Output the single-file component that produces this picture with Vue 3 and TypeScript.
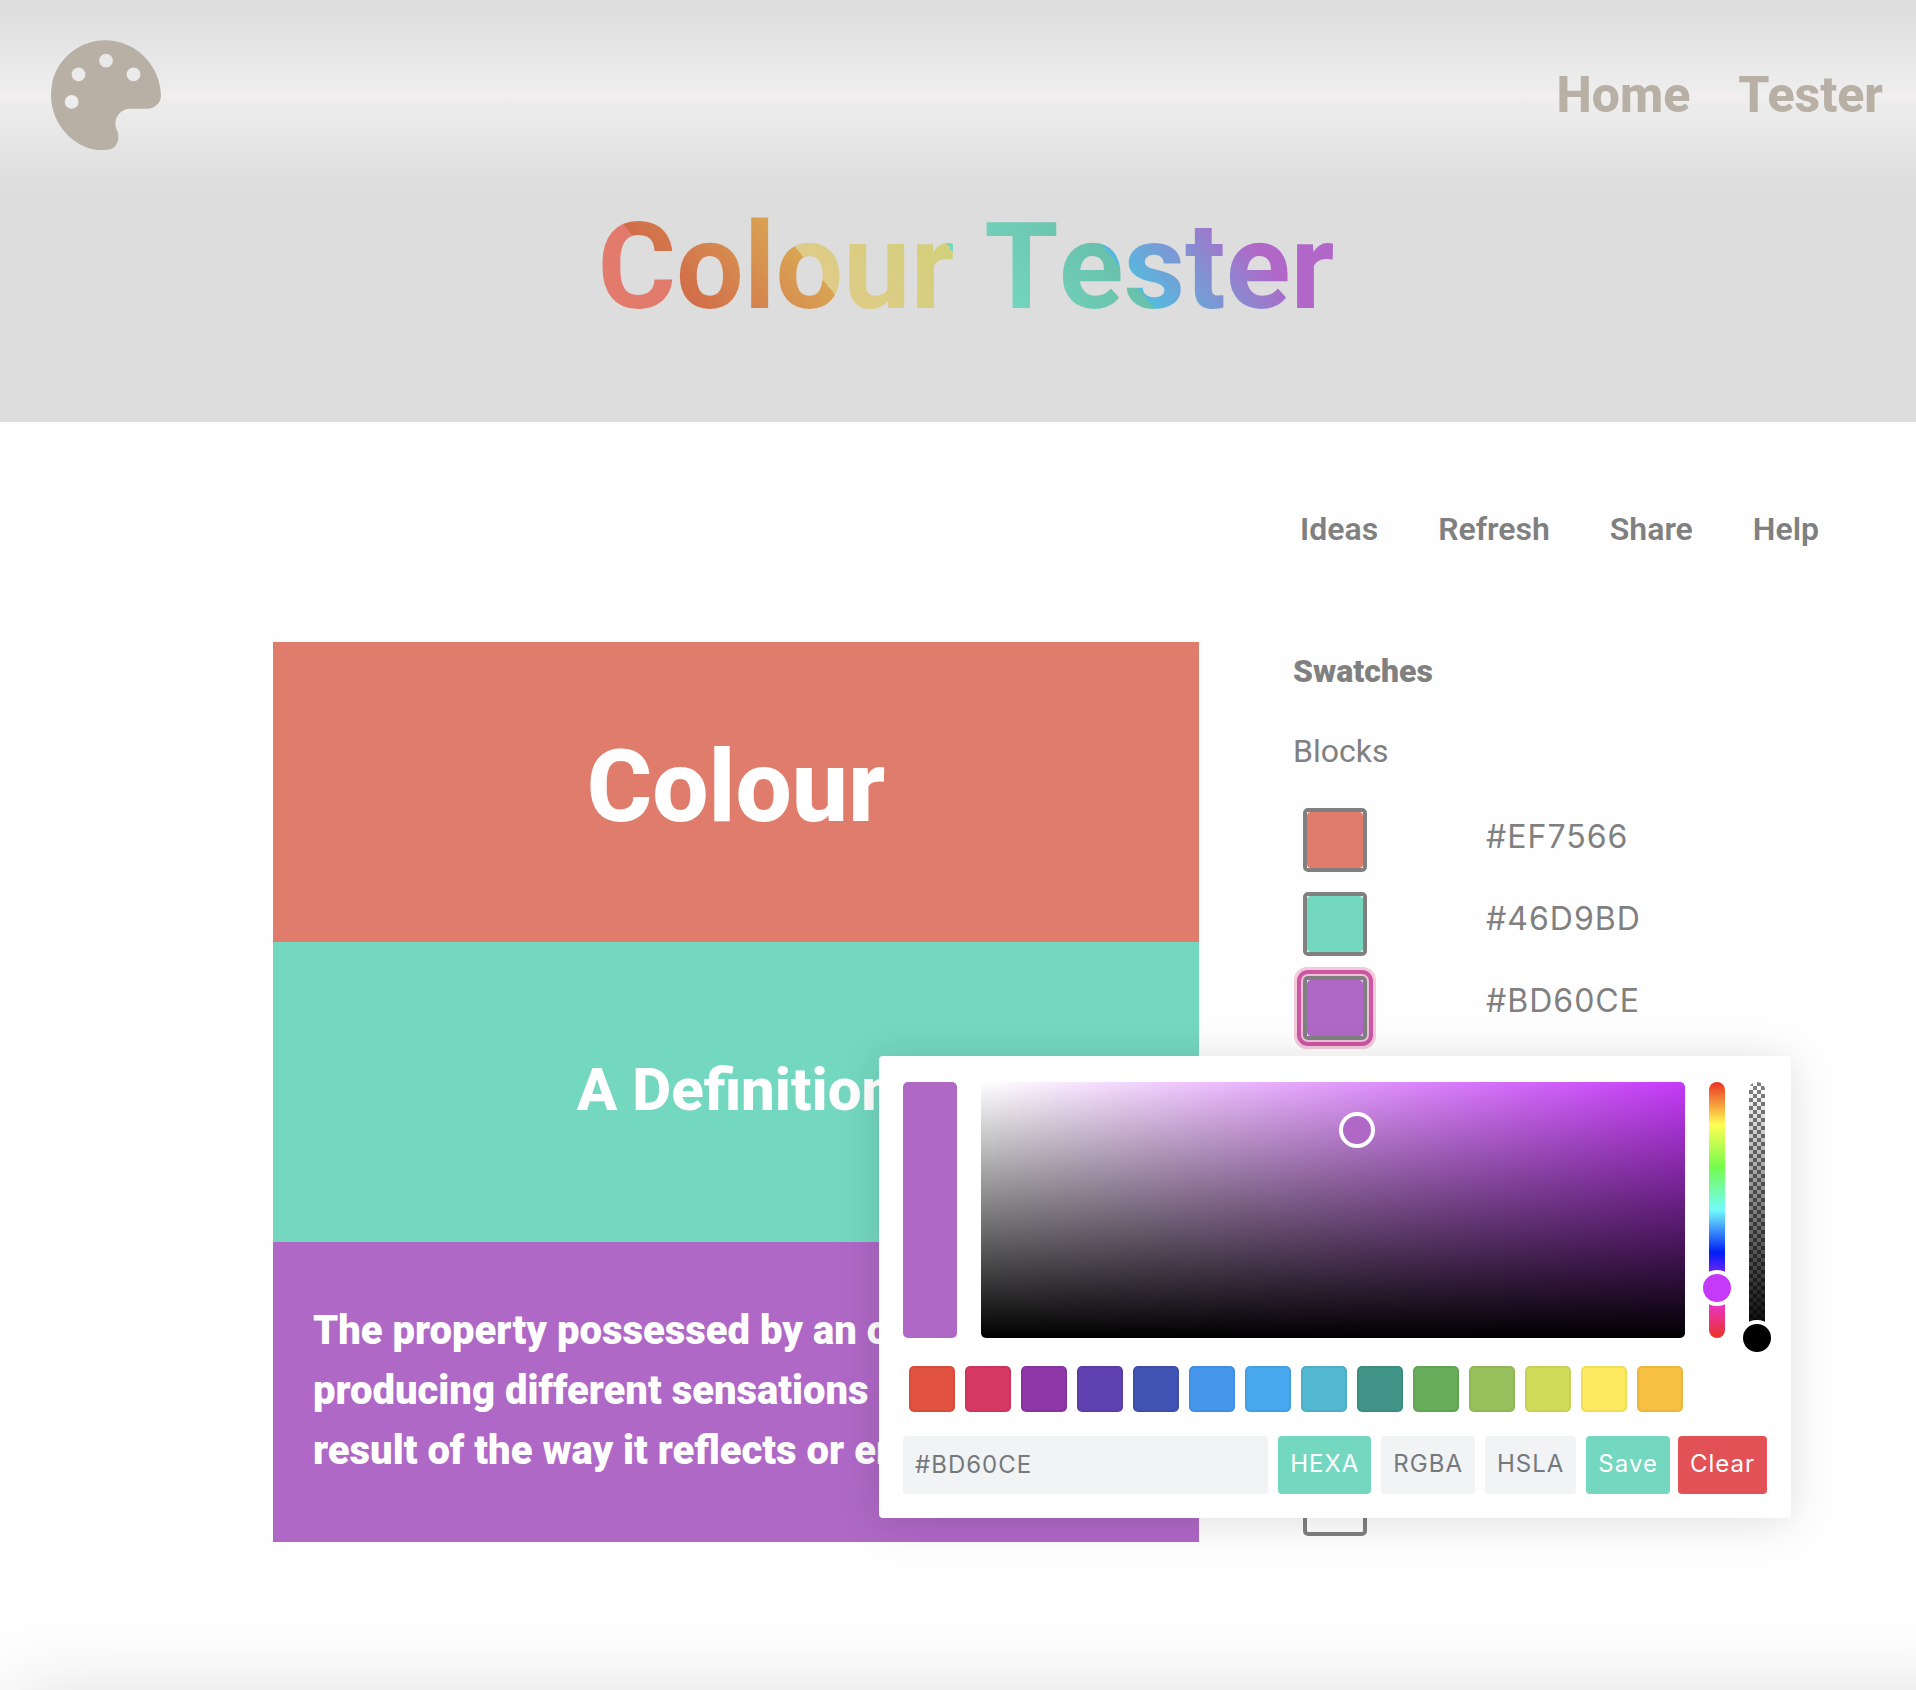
<script setup lang="ts">
import { ref } from 'vue'

interface Swatch {
  label: string
  hex: string
  fill: string
  active?: boolean
}

const navLinks: string[] = ['Home', 'Tester']
const tools: string[] = ['Ideas', 'Refresh', 'Share', 'Help']

const blocks: Swatch[] = [
  { label: 'Top block', hex: '#EF7566', fill: '#df7c6b' },
  { label: 'Middle block', hex: '#46D9BD', fill: '#74d7bf' },
  { label: 'Bottom block', hex: '#BD60CE', fill: '#af68c6', active: true },
]

const presets: string[] = [
  '#e15241', '#d63864', '#8f36a8', '#6041b1', '#4154b3', '#4696ec', '#48a8ee',
  '#53b8d1', '#419488', '#67ad5b', '#98c05c', '#d0dc59', '#fdea60', '#f6c143',
]

const formats: string[] = ['HEXA', 'RGBA', 'HSLA']
const format = ref('HEXA')
const colour = ref('#BD60CE')
const hue = ref(805)
const alpha = ref(1000)
</script>

<template>
  <div class="page">
    <header class="header">
      <nav class="nav" aria-label="Main">
        <a class="logo" href="#" aria-label="Home page">
          <svg viewBox="0 0 512 512" aria-hidden="true">
            <path
              fill="currentColor"
              d="M204 6C104 25 24 105 5 204c-36 192 132 333 264 306 42-6 54-56 38-90-23-46 10-100 62-100h80c32 0 63-27 63-59C511 103 366-25 204 6zM96 320a32 32 0 1 1 0-64 32 32 0 0 1 0 64zm32-128a32 32 0 1 1 0-64 32 32 0 0 1 0 64zm128-64a32 32 0 1 1 0-64 32 32 0 0 1 0 64zm128 64a32 32 0 1 1 0-64 32 32 0 0 1 0 64z"
            />
          </svg>
        </a>
        <div class="nav-links">
          <a v-for="link in navLinks" :key="link" href="#">{{ link }}</a>
        </div>
      </nav>
      <h1 class="title"><span>Colour Tester</span></h1>
    </header>

    <main class="main">
      <nav class="tools" aria-label="Tools">
        <a v-for="tool in tools" :key="tool" href="#">{{ tool }}</a>
      </nav>

      <div class="workspace">
        <section class="preview">
          <div class="block block-top"><h2>Colour</h2></div>
          <div class="block block-middle"><h3>A Definition</h3></div>
          <div class="block block-bottom">
            <p>
              The property possessed by an object of<br />
              producing different sensations<br />
              result of the way it reflects or emits light.
            </p>
          </div>
        </section>

        <aside class="panel">
          <h4>Swatches</h4>
          <h5>Blocks</h5>
          <div class="swatches">
            <div class="wells">
              <div v-for="block in blocks" :key="block.hex" class="well-slot">
                <button
                  type="button"
                  class="well"
                  :class="{ active: block.active }"
                  :aria-label="block.label"
                >
                  <span :style="{ background: block.fill }"></span>
                </button>

                <div v-if="block.active" class="picker" role="dialog" aria-label="Colour picker">
                  <div class="selection">
                    <div class="current"></div>
                    <div class="palette"><i class="handle"></i></div>
                    <div class="slider hue">
                      <input v-model="hue" type="range" min="0" max="1000" aria-label="Hue" />
                    </div>
                    <div class="slider alpha">
                      <input v-model="alpha" type="range" min="0" max="1000" aria-label="Opacity" />
                    </div>
                  </div>
                  <div class="presets">
                    <button
                      v-for="preset in presets"
                      :key="preset"
                      type="button"
                      :aria-label="preset"
                      :style="{ background: preset }"
                    ></button>
                  </div>
                  <div class="controls">
                    <input v-model="colour" type="text" aria-label="Colour value" spellcheck="false" />
                    <button
                      v-for="name in formats"
                      :key="name"
                      type="button"
                      :class="{ chosen: format === name }"
                      @click="format = name"
                    >
                      {{ name }}
                    </button>
                    <div class="actions">
                      <button type="button" class="save">Save</button>
                      <button type="button" class="clear">Clear</button>
                    </div>
                  </div>
                </div>
              </div>
              <button type="button" class="well last" aria-label="Text colour"></button>
            </div>
            <div class="codes">
              <span v-for="block in blocks" :key="block.hex">{{ block.hex }}</span>
            </div>
          </div>
        </aside>
      </div>
    </main>

    <div class="next"><div class="next-card"></div></div>
  </div>
</template>

<style>
body {
  margin: 0;
  background: #fefefe;
}
</style>

<style scoped>
.page,
.page * {
  box-sizing: border-box;
}

.page {
  display: flex;
  flex-direction: column;
  min-height: 100vh;
  overflow: hidden;
  color: #808080;
  font-family: Roboto, sans-serif;
  font-size: 32px;
  line-height: 48px;
}

.page a {
  color: inherit;
  text-decoration: none;
}

h1,
h2,
h3,
h4,
h5,
p {
  margin: 0;
}

button,
input {
  margin: 0;
  padding: 0;
  border: 0;
  font: inherit;
}

.header {
  background: #ddd;
}

.nav {
  display: flex;
  align-items: center;
  justify-content: space-between;
  height: 190px;
  padding: 0 33px 0 51px;
  background: linear-gradient(#ddd, #ededed 46%, #f1eeee 50%, #ededed 54%, #ddd);
  color: #b9b0a5;
}

.logo svg {
  display: block;
  width: 110px;
  height: 110px;
}

.nav-links {
  display: flex;
  gap: 48px;
  font-size: 50px;
  font-weight: 800;
}

.title {
  padding: 7px 0 85px 16px;
  font-size: 120px;
  font-weight: 700;
  line-height: 140px;
  text-align: center;
  font-kerning: none;
}

.title span {
  display: inline-block;
  background: linear-gradient(
    50deg,
    #e37b6c calc(50% - 235px),
    #d16c49 calc(50% - 235px),
    #daa453 calc(50% - 118px),
    #dfcb88 calc(50% - 118px),
    #d2d07a 50%,
    #74d7bf 50%,
    #69c1ac calc(50% + 118px),
    #54bbde calc(50% + 118px),
    #b067c7 calc(50% + 235px)
  );
  background-clip: text;
  color: transparent;
}

.main {
  padding: 83px 96px 0 14.25%;
}

.tools {
  display: flex;
  justify-content: flex-end;
  gap: 60px;
  margin-bottom: 89px;
  padding-right: 1px;
  font-weight: 600;
}

.workspace {
  display: grid;
  grid-template-columns: 926fr 527fr;
  gap: 94px;
}

.block {
  display: flex;
  align-items: center;
  justify-content: center;
  height: 300px;
  padding: 0 40px;
  overflow: hidden;
  color: #fff;
}

.block-top {
  background: #df7c6b;
}

.block-middle {
  background: #74d7bf;
}

.block-bottom {
  justify-content: flex-start;
  background: #af68c6;
}

.block h2 {
  padding-bottom: 10px;
  font-size: 100px;
  font-weight: 800;
  line-height: 120px;
}

.block h3 {
  padding-bottom: 4px;
  font-size: 60px;
  font-weight: 800;
  line-height: 72px;
}

.block p {
  padding-bottom: 2px;
  font-size: 40px;
  font-weight: 900;
  line-height: 60px;
  white-space: nowrap;
}

.panel {
  padding-top: 5px;
}

.panel h4,
.panel h5 {
  font-size: 32px;
}

.panel h4 {
  margin-bottom: 32px;
  font-weight: 900;
}

.panel h5 {
  margin-bottom: 33px;
  font-weight: 400;
}

.swatches {
  display: flex;
  gap: 119px;
  padding-left: 10px;
}

.wells {
  display: flex;
  flex-direction: column;
  gap: 20px;
}

.well-slot {
  position: relative;
  height: 64px;
}

.well {
  display: block;
  width: 64px;
  height: 64px;
  border: 4px solid #808080;
  border-radius: 5px;
  background: #fff;
}

.well span {
  display: block;
  height: 100%;
  border-radius: 4px;
}

.well.active {
  box-shadow:
    0 0 0 2px #ecc0dc,
    0 0 0 6px #cb57a2,
    0 0 0 9px #f3cadc;
}

.well.last {
  margin-top: 412px;
}

.codes {
  display: flex;
  flex-direction: column;
  margin-top: -12px;
  font-family: Inter, sans-serif;
  line-height: 82px;
  letter-spacing: 1px;
}

.picker {
  position: absolute;
  z-index: 1;
  top: 80px;
  left: -424px;
  width: 912px;
  padding: 26px 24px 24px;
  border-radius: 4px;
  background: #fff;
  box-shadow:
    0 5px 48px rgba(0, 0, 0, 0.1),
    0 0 32px rgba(0, 0, 0, 0.03);
}

.selection {
  display: flex;
  gap: 24px;
  height: 256px;
  padding-right: 2px;
}

.current {
  width: 54px;
  border-radius: 5px;
  background: #af68c6;
}

.palette {
  position: relative;
  flex: 1;
  border-radius: 5px;
  background:
    linear-gradient(to top, #000, transparent),
    linear-gradient(to right, #fff, #c53af8);
}

.handle {
  position: absolute;
  top: 18.75%;
  left: 53.4%;
  width: 36px;
  height: 36px;
  margin: -18px;
  border: 4px solid #fff;
  border-radius: 50%;
  background: #af68c6;
}

.slider {
  position: relative;
  width: 16px;
  border-radius: 8px;
}

.hue {
  background: linear-gradient(
    #eb3323,
    #fffe54 16.67%,
    #75fb4c 33.33%,
    #73fbfd 50%,
    #001df5 66.67%,
    #ea33f7 83.33%,
    #eb3323
  );
}

.alpha {
  background:
    linear-gradient(transparent, #000),
    repeating-conic-gradient(#fff 0 25%, #808080 0 50%) 0 0 / 8px 8px;
}

.slider input {
  position: absolute;
  top: -18px;
  left: -10px;
  width: 36px;
  height: 292px;
  background: transparent;
  appearance: none;
  writing-mode: vertical-lr;
}

.slider input::-webkit-slider-thumb {
  width: 36px;
  height: 36px;
  border: 4px solid #fff;
  border-radius: 50%;
  background: #c53af8;
  appearance: none;
}

.slider.alpha input::-webkit-slider-thumb {
  background: #000;
}

.presets {
  display: flex;
  gap: 10px;
  margin: 28px 6px 24px;
}

.presets button {
  width: 46px;
  height: 46px;
  border: 2px solid rgba(0, 0, 0, 0.05);
  border-radius: 5px;
}

.controls {
  display: flex;
  gap: 10px;
  font-family: Inter, sans-serif;
  font-size: 24px;
  line-height: 36px;
}

.controls input,
.controls button {
  height: 58px;
  padding: 0 12px 2px;
  border-radius: 4px;
  background: #f1f3f4;
  color: #75797e;
  letter-spacing: 1px;
}

.controls input {
  flex: 1;
  min-width: 0;
}

.controls .chosen,
.controls .save {
  background: #74d7bf;
  color: #fff;
}

.controls .clear {
  background: #e15156;
  color: #fff;
}

.actions {
  display: flex;
  gap: 8px;
}

.next {
  height: 120px;
  margin-top: auto;
  padding: 120px 0 0 14px;
  overflow: hidden;
}

.next-card {
  height: 120px;
  margin-right: -80px;
  box-shadow: 0 5px 80px rgba(0, 0, 0, 0.13);
}
</style>
